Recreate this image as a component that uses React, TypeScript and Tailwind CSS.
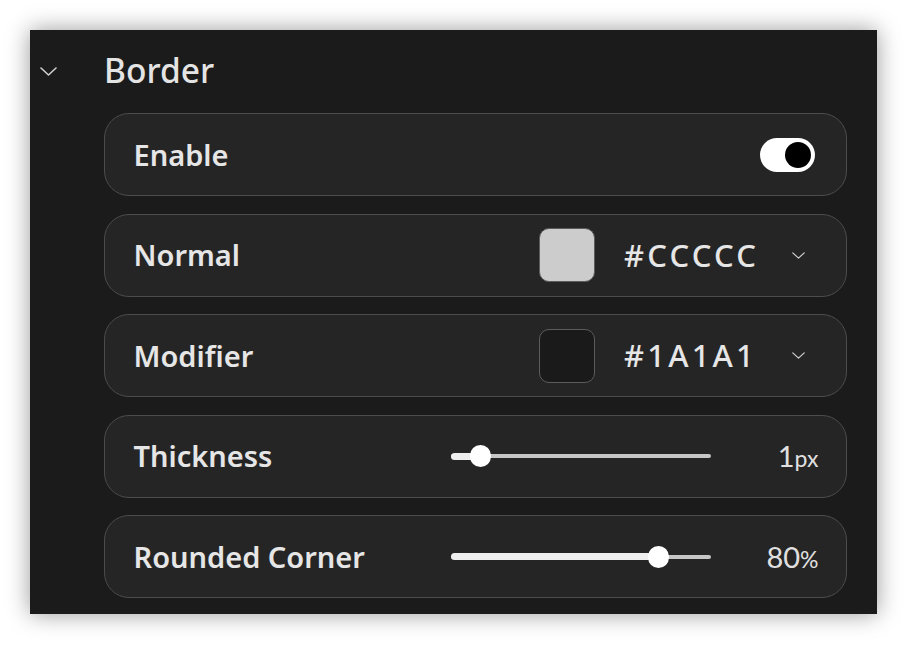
import React from "react";

const sans = "font-['Noto_Sans','Liberation_Sans',sans-serif]";
const lato = "font-['Lato','Noto_Sans',sans-serif]";

function Chevron({ className }: { className: string }) {
  return (
    <svg viewBox="0 0 17 9" className={className} fill="none">
      <path d="M1 1l7.5 7L16 1" stroke="currentColor" strokeWidth="1.6" strokeLinecap="round" strokeLinejoin="round" />
    </svg>
  );
}

function Row({ label, children }: { label: string; children?: React.ReactNode }) {
  return (
    <div className="flex h-[83px] items-center rounded-[25px] border-[1.5px] border-[#4c4c4c] bg-[#252525] pl-[28.5px]">
      <span className={`${sans} w-[317px] shrink-0 text-[29px] font-semibold text-[#e6e6e6]`}>
        {label}
      </span>
      {children}
    </div>
  );
}

function ColorRow({ label, swatch, hex }: { label: string; swatch: string; hex: string }) {
  return (
    <Row label={label}>
      <div className="ml-auto flex items-center pr-[41px]">
        <div
          className="h-[54px] w-[56px] rounded-[10px] border-[1.5px] border-[#5c5c5c]"
          style={{ backgroundColor: swatch }}
        />
        <div className="ml-[29px] w-[138px] whitespace-nowrap">
          <span className={`${sans} text-[31px] font-medium tracking-[3.2px] text-[#e6e6e6]`}>
            {hex}
          </span>
        </div>
        <Chevron className="ml-[30px] h-[7px] w-[13px] text-[#cfcfcf]" />
      </div>
    </Row>
  );
}

function SliderRow({ label, pos, value, unit }: { label: string; pos: number; value: string; unit: string }) {
  return (
    <Row label={label}>
      <div className="relative h-[22px] w-[260px]">
        <div className="absolute left-0 right-0 top-[9px] h-[4px] rounded-full bg-[#c6c6c6]" />
        <div
          className="absolute left-0 top-[7.5px] h-[7px] rounded-full bg-[#eeeeee]"
          style={{ width: pos }}
        />
        <div
          className="absolute top-0 h-[22px] w-[21px] rounded-full bg-white"
          style={{ left: pos - 10.5 }}
        />
      </div>
      <div className={`${lato} ml-auto flex items-baseline pr-[27.5px] text-[#e0e0e0]`}>
        <span className="text-[29px]">{value}</span>
        <span className="text-[23px]">{unit}</span>
      </div>
    </Row>
  );
}

export default function App() {
  return (
    <div className="min-h-screen bg-white p-[30px] pb-[31px]">
      <div className="flex flex-col bg-[#1b1b1b] pb-[16px] pr-[30px] shadow-[0_0_22px_rgba(0,0,0,0.4)]">
        <div className="flex h-[83px] items-center">
          <Chevron className="ml-[10px] h-[9px] w-[17px] text-[#d0d0d0]" />
          <span className={`${sans} ml-[47px] -translate-y-px text-[33.5px] font-medium text-[#e4e4e4]`}>
            Border
          </span>
        </div>
        <div className="ml-[74px] flex flex-col gap-[17.5px]">
          <Row label="Enable">
            <div className="ml-auto mr-[31.5px] flex h-[34px] w-[55px] items-center justify-end rounded-full bg-white pr-[4px]">
              <div className="h-[26px] w-[26px] rounded-full bg-black" />
            </div>
          </Row>
          <ColorRow label="Normal" swatch="#cccccc" hex="#CCCCC" />
          <ColorRow label="Modifier" swatch="#1a1a1a" hex="#1A1A1" />
          <SliderRow label="Thickness" pos={29.5} value="1" unit="px" />
          <SliderRow label="Rounded Corner" pos={207.5} value="80" unit="%" />
        </div>
      </div>
    </div>
  );
}
